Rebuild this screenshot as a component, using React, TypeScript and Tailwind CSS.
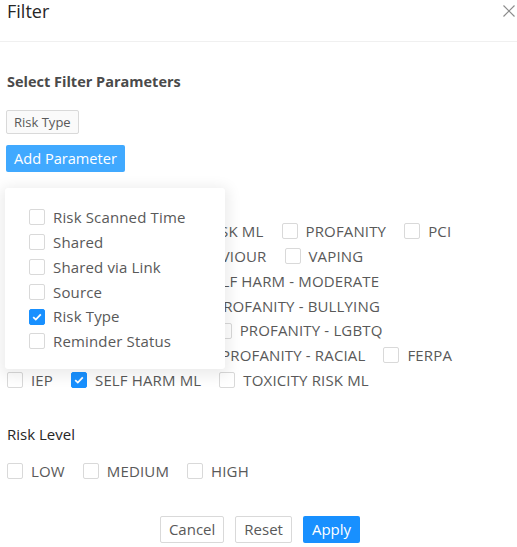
import React from 'react';

function Box({ checked }: { checked?: boolean }) {
  if (checked) {
    return (
      <span className="w-4 h-4 rounded-[2px] bg-[#1890ff] border border-[#1890ff] flex items-center justify-center shrink-0">
        <svg width="10" height="8" viewBox="0 0 10 8" fill="none">
          <path d="M1.2 4.1 L3.8 6.6 L8.8 1.4" stroke="white" strokeWidth="1.8" />
        </svg>
      </span>
    );
  }
  return <span className="w-4 h-4 rounded-[2px] bg-white border border-[#d9d9d9] shrink-0" />;
}

function Check({ label, checked }: { label: string; checked?: boolean }) {
  return (
    <label className="flex items-center mr-[10px] h-[24.8px]">
      <Box checked={checked} />
      <span className="pl-[8px] pr-[8px] text-[#595959] whitespace-nowrap tracking-[0.15px]">{label}</span>
    </label>
  );
}

// rows are laid out the way the modal wraps them at this width
const rows: { label: string; checked?: boolean }[][] = [
  [{ label: 'BIAS' }, { label: 'HATE SPEECH RISK ML' }, { label: 'PROFANITY' }, { label: 'PCI' }],
  [{ label: 'WEAPON' }, { label: 'RISKY BEHAVIOUR' }, { label: 'VAPING' }],
  [{ label: 'SELF HARM - HIGH' }, { label: 'SELF HARM - MODERATE' }],
  [{ label: 'SELF HARM - ACUTE' }, { label: 'PROFANITY - BULLYING' }],
  [{ label: 'PROFANITY - WEAPONS' }, { label: 'PROFANITY - LGBTQ' }],
  [{ label: 'PROFANITY - SEXUAL' }, { label: 'PROFANITY - RACIAL' }, { label: 'FERPA' }],
  [{ label: 'IEP' }, { label: 'SELF HARM ML', checked: true }, { label: 'TOXICITY RISK ML' }],
];

const params = [
  { label: 'Risk Scanned Time' },
  { label: 'Shared' },
  { label: 'Shared via Link' },
  { label: 'Source' },
  { label: 'Risk Type', checked: true },
  { label: 'Reminder Status' },
];

export default function App() {
  return (
    <div
      className="relative w-[517px] h-[547px] bg-white overflow-hidden text-[15px] text-[#262626]"
      style={{ fontFamily: '"Open Sans", "Noto Sans", sans-serif' }}
    >
      <div className="h-[42px] border-b border-[#f0f0f0] flex justify-between px-[7px]">
        <h1 className="text-[18px] leading-[22px] text-[#262626]">Filter</h1>
        <svg width="12" height="12" viewBox="0 0 12 12" className="mt-[5px] -mr-[5px]">
          <path d="M0.5 0.5 L11.5 11.5 M11.5 0.5 L0.5 11.5" stroke="#8c8c8c" strokeWidth="1.2" />
        </svg>
      </div>

      <div className="px-[6px]">
        <h2 className="mt-[29px] text-[14.5px] leading-[22px] font-bold text-[#4a4a4a] px-[1px]">
          Select Filter Parameters
        </h2>
        <div className="mt-[17px] flex">
          <span className="border border-[#d9d9d9] bg-[#fafafa] rounded-[2px] h-[24px] px-[7px] text-[13px] leading-[22px] text-[#595959]">
            Risk Type
          </span>
        </div>
        <div className="mt-[11px] flex">
          <button className="bg-[#40a9ff] text-white rounded-[2px] h-[27px] px-[8px] text-[14.6px] leading-[27px]">
            Add Parameter
          </button>
        </div>

        <div className="mt-[47px] flex flex-col pl-[1px]">
          {rows.map((r, i) => (
            <div key={i} className="flex items-center">
              {r.map((c) => (
                <Check key={c.label} label={c.label} checked={c.checked} />
              ))}
            </div>
          ))}
        </div>

        <div className="mt-[30px] px-[1px] text-[#262626] leading-[22px]">Risk Level</div>
        <div className="mt-[14px] flex items-center pl-[1px]">
          <Check label="LOW" />
          <Check label="MEDIUM" />
          <Check label="HIGH" />
        </div>

        <div className="mt-[33px] flex justify-center gap-[11px] pl-[3px]">
          <button className="h-[27px] px-[8px] border border-[#d9d9d9] rounded-[2px] text-[#595959] leading-[25px]">Cancel</button>
          <button className="h-[27px] px-[8px] border border-[#d9d9d9] rounded-[2px] text-[#595959] leading-[25px]">Reset</button>
          <button className="h-[27px] px-[9px] bg-[#1890ff] rounded-[2px] text-white leading-[27px]">Apply</button>
        </div>
      </div>

      <div className="absolute left-[5px] top-[188px] w-[220px] h-[181px] bg-white rounded-[3px] shadow-[0_3px_14px_4px_rgba(0,0,0,0.08)] pt-[17px] pl-[24px] flex flex-col">
        {params.map((p) => (
          <Check key={p.label} label={p.label} checked={p.checked} />
        ))}
      </div>
    </div>
  );
}
